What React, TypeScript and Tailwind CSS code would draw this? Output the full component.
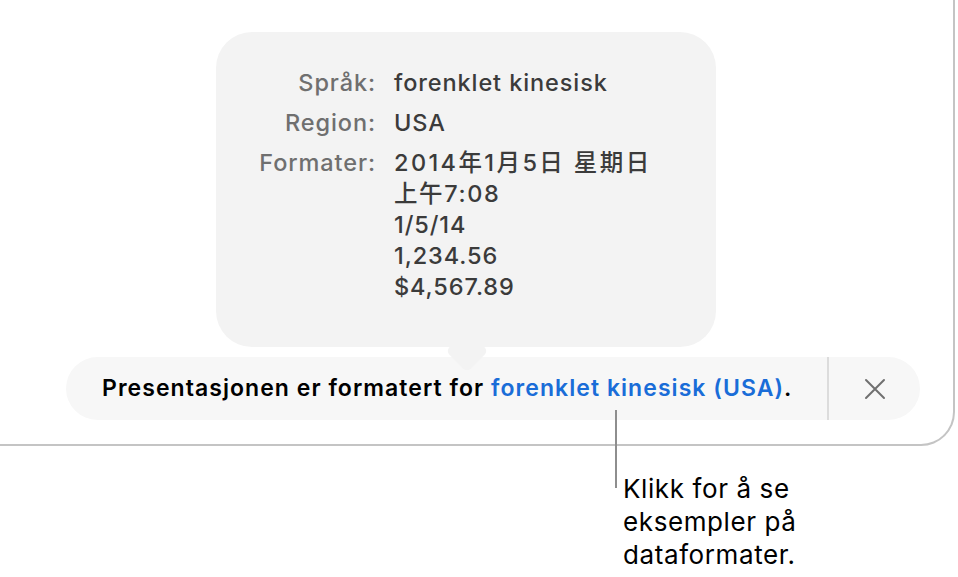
import React from 'react';

const font = { fontFamily: 'Inter, "Noto Sans CJK SC", sans-serif' };

export default function App() {
    return (
        <div className="relative w-[958px] h-[577px] bg-white overflow-hidden" style={font}>
            <div className="w-[955px] h-[446px] border-r-2 border-b-2 border-[#c4c4c4] rounded-br-[34px] pt-[32px]">
                {/* info popover */}
                <div className="relative ml-[216px] w-[500px] h-[315px] rounded-[36px] bg-[#f3f3f3] pt-[35px] pl-[16px]">
                    <div className="grid grid-cols-[144px_1fr] gap-x-[18px] gap-y-[9px] text-[23.5px] leading-[31px] font-medium tracking-[0.9px]">
                        <div className="text-right text-[#6f6f6f]">Språk:</div>
                        <div className="text-[#3b3b3b]">forenklet kinesisk</div>
                        <div className="text-right text-[#6f6f6f]">Region:</div>
                        <div className="text-[#3b3b3b]">USA</div>
                        <div className="text-right text-[#6f6f6f]">Formater:</div>
                        <div className="text-[#3b3b3b] flex flex-col">
                            <span className="tracking-[2.4px]">2014年1月5日 星期日</span>
                            <span className="tracking-[1.6px]">上午7:08</span>
                            <span>1/5/14</span>
                            <span>1,234.56</span>
                            <span>$4,567.89</span>
                        </div>
                    </div>
                    <div className="absolute left-[236px] -bottom-[19px] w-[30px] h-[30px] rotate-45 rounded-[5px] bg-[#f3f3f3] z-10" />
                </div>

                {/* language bar */}
                <div className="relative mt-[10px] ml-[66px] w-[854px] h-[63px] rounded-full bg-[#f7f7f7] flex items-center">
                    <div className="flex-1 pl-[36px] text-[23px] font-semibold text-black tracking-[1.05px] whitespace-nowrap relative z-20">
                        Presentasjonen er formatert for <span className="text-[#1a6dd8]">forenklet kinesisk (USA)</span>.
                    </div>
                    <div className="w-[2px] self-stretch bg-[#dcdcdc]" />
                    <div className="w-[91px] flex items-center justify-center">
                        <svg width="22" height="22" viewBox="0 0 22 22" fill="none" stroke="#707070" strokeWidth="2" strokeLinecap="round">
                            <path d="M2 2 L20 20 M20 2 L2 20" />
                        </svg>
                    </div>
                </div>
            </div>

            {/* callout */}
            <div className="absolute left-[615px] top-[410px] w-[2px] h-[78px] bg-[#8e8e8e]" />
            <div className="ml-[623px] mt-[26px] text-[26px] leading-[33px] tracking-[0.6px] text-black">
                Klikk for å se<br />
                eksempler på<br />
                dataformater.
            </div>
        </div>
    );
}
